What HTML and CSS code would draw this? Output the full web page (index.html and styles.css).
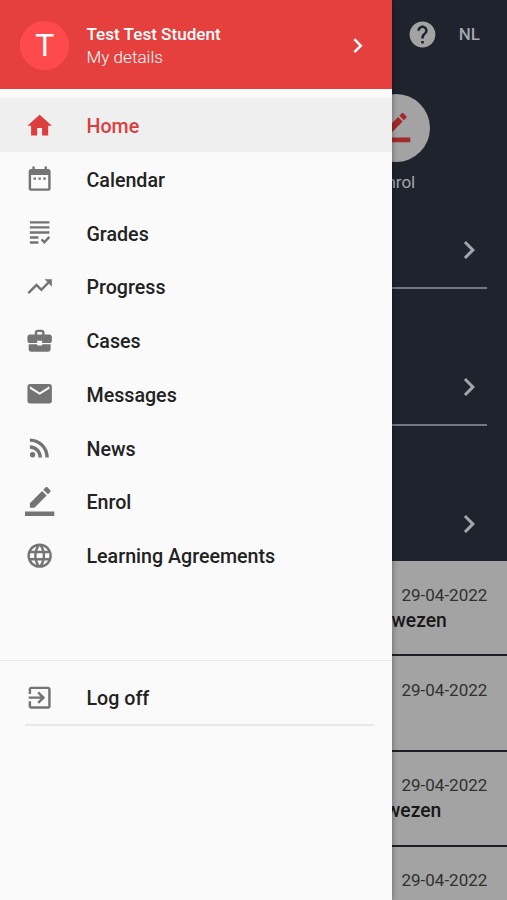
FILE: index.html
```html
<!DOCTYPE html>
<html lang="en">
<head>
    <meta charset="UTF-8">
    <meta name="viewport" content="width=device-width, initial-scale=1.0">
    <title>Home</title>
    <link rel="stylesheet" href="styles.css">
</head>
<body>
    <main class="page">
        <div class="top">
            <div class="toolbar">
                <svg class="help" viewBox="0 0 24 24"><path d="M12 2C6.48 2 2 6.48 2 12s4.48 10 10 10 10-4.48 10-10S17.52 2 12 2zm1 17h-2v-2h2v2zm2.07-7.75l-.9.92C13.45 12.9 13 13.5 13 15h-2v-.5c0-1.1.45-2.1 1.17-2.83l1.24-1.26c.37-.36.59-.86.59-1.41 0-1.1-.9-2-2-2s-2 .9-2 2H8c0-2.21 1.79-4 4-4s4 1.79 4 4c0 .88-.36 1.68-.93 2.25z"/></svg>
                <span class="lang">NL</span>
            </div>
            <div class="shortcut">
                <div class="circle">
                    <svg class="icon" viewBox="0 0 24 24"><path d="M17.75 7L14 3.25l-10 10V17h3.75l10-10zm2.96-2.96c.39-.39.39-1.02 0-1.41L18.37.29c-.39-.39-1.02-.39-1.41 0L15 2.25 18.75 6l1.96-1.96zM0 20h24v4H0z"/></svg>
                </div>
                <span>Enrol</span>
            </div>
            <div class="block">
                <svg viewBox="0 0 24 24"><path d="M8.59 16.59L13.17 12 8.59 7.41 10 6l6 6-6 6z"/></svg>
            </div>
            <div class="block">
                <svg viewBox="0 0 24 24"><path d="M8.59 16.59L13.17 12 8.59 7.41 10 6l6 6-6 6z"/></svg>
            </div>
            <div class="block last">
                <svg viewBox="0 0 24 24"><path d="M8.59 16.59L13.17 12 8.59 7.41 10 6l6 6-6 6z"/></svg>
            </div>
        </div>
        <div class="news">
            <p class="date">29-04-2022</p>
            <p class="title">wezen</p>
        </div>
        <div class="news">
            <p class="date">29-04-2022</p>
        </div>
        <div class="news">
            <p class="date">29-04-2022</p>
            <p class="title short">wezen</p>
        </div>
        <div class="news">
            <p class="date">29-04-2022</p>
        </div>
    </main>

    <aside class="drawer">
        <header class="user">
            <div class="avatar">T</div>
            <div class="userdata">
                <p class="name">Test Test Student</p>
                <p class="details">My details</p>
            </div>
            <svg class="icon" viewBox="0 0 24 24"><path d="M8.59 16.59L13.17 12 8.59 7.41 10 6l6 6-6 6z"/></svg>
        </header>
        <nav class="menu">
            <a class="item active">
                <svg class="icon" viewBox="0 0 24 24"><path d="M10 20v-6h4v6h5v-8h3L12 3 2 12h3v8z"/></svg>
                <span>Home</span>
            </a>
            <a class="item">
                <svg class="icon" viewBox="0 0 24 24"><path d="M9 11H7v2h2v-2zm4 0h-2v2h2v-2zm4 0h-2v2h2v-2zm2-7h-1V2h-2v2H8V2H6v2H5c-1.11 0-1.99.9-1.99 2L3 20c0 1.1.89 2 2 2h14c1.1 0 2-.9 2-2V6c0-1.1-.9-2-2-2zm0 16H5V9h14v11z"/></svg>
                <span>Calendar</span>
            </a>
            <a class="item">
                <svg class="icon" viewBox="0 0 24 24"><path d="M4 2.6h16v2H4zM4 6.7h16v2H4zM4 10.8h16v2H4zM4 14.9h7v2H4zM4 19h7v2H4z"/><path class="line" d="M13.6 17.6l2.3 2.3 4-4.4"/></svg>
                <span>Grades</span>
            </a>
            <a class="item">
                <svg class="icon" viewBox="0 0 24 24"><path d="M16 6l2.29 2.29-4.88 4.88-4-4L2 16.59 3.41 18l6-6 4 4 6.3-6.29L22 12V6z"/></svg>
                <span>Progress</span>
            </a>
            <a class="item">
                <svg class="icon" viewBox="0 0 24 24"><path d="M10 16v-1H3v4c0 1.1.9 2 2 2h14c1.1 0 2-.9 2-2v-4h-7v1h-4zM20 7h-4V5.5C16 4 15 3 13.6 3h-3.2C9 3 8 4 8 5.5V7H4c-1.1 0-2 .9-2 2v3c0 1.1.9 2 2 2h6v-2h4v2h6c1.1 0 2-.9 2-2V9c0-1.1-.9-2-2-2zm-6 0h-4V5.6c0-.4.2-.6.6-.6h2.8c.4 0 .6.2.6.6V7z"/></svg>
                <span>Cases</span>
            </a>
            <a class="item">
                <svg class="icon" viewBox="0 0 24 24"><path d="M20 4H4c-1.1 0-1.99.9-1.99 2L2 18c0 1.1.9 2 2 2h16c1.1 0 2-.9 2-2V6c0-1.1-.9-2-2-2zm0 4l-8 5-8-5V6l8 5 8-5v2z"/></svg>
                <span>Messages</span>
            </a>
            <a class="item">
                <svg class="icon" viewBox="0 0 24 24"><circle cx="6.18" cy="17.82" r="2.18"/><path d="M4 4.44v2.83c7.03 0 12.73 5.7 12.73 12.73h2.83c0-8.59-6.97-15.56-15.56-15.56zm0 5.66v2.83c3.9 0 7.07 3.17 7.07 7.07h2.83c0-5.47-4.43-9.9-9.9-9.9z"/></svg>
                <span>News</span>
            </a>
            <a class="item">
                <svg class="icon" viewBox="0 0 24 24"><path d="M17.75 7L14 3.25l-10 10V17h3.75l10-10zm2.96-2.96c.39-.39.39-1.02 0-1.41L18.37.29c-.39-.39-1.02-.39-1.41 0L15 2.25 18.75 6l1.96-1.96zM0 20h24v4H0z"/></svg>
                <span>Enrol</span>
            </a>
            <a class="item">
                <svg class="icon" viewBox="0 0 24 24"><path d="M11.99 2C6.47 2 2 6.48 2 12s4.47 10 9.99 10C17.52 22 22 17.52 22 12S17.52 2 11.99 2zm6.93 6h-2.95c-.32-1.25-.78-2.45-1.38-3.56 1.84.63 3.37 1.91 4.33 3.56zM12 4.04c.83 1.2 1.48 2.53 1.91 3.96h-3.82c.43-1.43 1.08-2.76 1.91-3.96zM4.26 14C4.1 13.36 4 12.69 4 12s.1-1.36.26-2h3.38c-.08.66-.14 1.32-.14 2 0 .68.06 1.34.14 2H4.26zm.82 2h2.95c.32 1.25.78 2.45 1.38 3.56-1.84-.63-3.37-1.9-4.33-3.56zm2.95-8H5.08c.96-1.66 2.49-2.93 4.33-3.56C8.81 5.55 8.35 6.75 8.03 8zM12 19.96c-.83-1.2-1.48-2.53-1.91-3.96h3.82c-.43 1.43-1.08 2.76-1.91 3.96zM14.34 14H9.66c-.09-.66-.16-1.32-.16-2 0-.68.07-1.35.16-2h4.68c.09.65.16 1.32.16 2 0 .68-.07 1.34-.16 2zm.25 5.56c.6-1.11 1.06-2.31 1.38-3.56h2.95c-.96 1.65-2.49 2.93-4.33 3.56zM16.36 14c.08-.66.14-1.32.14-2 0-.68-.06-1.34-.14-2h3.38c.16.64.26 1.31.26 2s-.1 1.36-.26 2h-3.38z"/></svg>
                <span>Learning Agreements</span>
            </a>
        </nav>
        <div class="logoff">
            <a class="item">
                <svg class="icon" viewBox="0 0 24 24"><path d="M10.09 15.59L11.5 17l5-5-5-5-1.41 1.41L12.67 11H3v2h9.67l-2.58 2.59zM19 3H5c-1.11 0-2 .9-2 2v4h2V5h14v14H5v-4H3v4c0 1.1.89 2 2 2h14c1.1 0 2-.9 2-2V5c0-1.1-.9-2-2-2z"/></svg>
                <span>Log off</span>
            </a>
        </div>
    </aside>
</body>
</html>
```
FILE: styles.css
```css
* {
    box-sizing: border-box;
    padding: 0;
    margin: 0;
}

body {
    position: relative;
    height: 900px;
    overflow: hidden;
    font-family: Roboto, "Liberation Sans", sans-serif;
    background-color: #a3a3a3;
}

svg {
    display: block;
    flex-shrink: 0;
    fill: currentColor;
}

.icon {
    width: 29.3px;
    height: 29.3px;
}

.line {
    fill: none;
    stroke: currentColor;
    stroke-width: 2;
}

/* page behind the menu */
.page {
    height: 900px;
    overflow: hidden;
}

.top {
    height: 561px;
    background-color: #1e232e;
    color: #a4a6ab;
}

.toolbar {
    display: flex;
    justify-content: flex-end;
    align-items: center;
    gap: 21px;
    height: 69px;
    padding-right: 27px;
}

.help {
    width: 31px;
    height: 31px;
    color: #a3a3a3;
}

.lang {
    padding-bottom: 2px;
    font-size: 17px;
    font-weight: 500;
}

.shortcut {
    display: flex;
    flex-direction: column;
    align-items: center;
    gap: 9px;
    width: 68px;
    height: 143px;
    margin-left: auto;
    margin-right: 77px;
    padding-top: 25px;
    font-size: 17px;
    line-height: 22px;
}

.circle {
    display: flex;
    justify-content: center;
    align-items: center;
    width: 68px;
    height: 68px;
    border-radius: 50%;
    background-color: #a3a3a3;
    color: #a22a2b;
}

.block {
    display: flex;
    justify-content: flex-end;
    align-items: center;
    height: 77px;
    margin: 0 20px 60px;
    border-bottom: 2px solid #747880;
}

.block svg {
    width: 36px;
    height: 36px;
}

.last {
    border-bottom: none;
    height: 75px;
    margin-bottom: 0;
}

.news {
    height: 95.3px;
    padding: 22.6px 19.7px 0;
    border-bottom: 2px solid #1c2024;
    background-color: #a3a3a3;
    text-align: right;
}

.date {
    font-size: 17px;
    line-height: 23px;
    color: #303030;
}

.title {
    padding-right: 40.5px;
    font-size: 19.3px;
    font-weight: 500;
    line-height: 27px;
    color: #181818;
}

.short {
    padding-right: 46px;
}

/* menu */
.drawer {
    position: absolute;
    top: 0;
    left: 0;
    width: 392px;
    height: 900px;
    background-color: #fafafa;
    box-shadow: 0 0 6px rgba(0, 0, 0, .4);
}

.user {
    display: flex;
    align-items: center;
    height: 89px;
    padding: 2px 19.5px 0 20.3px;
    background-color: #e5403e;
    color: #fff;
}

.avatar {
    width: 49px;
    height: 49px;
    margin-bottom: 1px;
    border-radius: 50%;
    background-color: #ff4a4b;
    font-size: 32px;
    line-height: 49px;
    text-align: center;
}

.userdata {
    flex: 1;
    padding-left: 17.2px;
}

.name {
    font-size: 17.1px;
    font-weight: 500;
    line-height: 23px;
}

.details {
    font-size: 17.1px;
    font-weight: 300;
    line-height: 23px;
}

.menu {
    height: 572px;
    padding-top: 9.3px;
    border-bottom: 1px solid #e8e8e8;
}

.item {
    display: flex;
    align-items: center;
    gap: 31.8px;
    height: 53.75px;
    padding-left: 25.4px;
    color: #747474;
}

.item span {
    padding-top: 3px;
    font-size: 19.65px;
    font-weight: 500;
    color: #222;
}

.active {
    background-color: #efefef;
}

.active,
.active span {
    color: #dd3d3c;
}

.logoff {
    margin: 10px 18px 0 25px;
    border-bottom: 2px solid #e8e8e8;
}

.logoff .item {
    height: 53px;
    padding-left: .4px;
}

.logoff span {
    padding-top: 1.5px;
}
```
